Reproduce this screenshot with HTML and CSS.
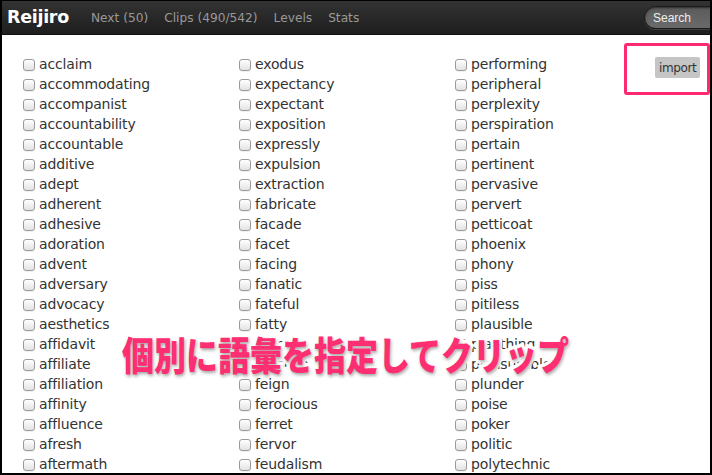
FILE: index.html
```html
<!DOCTYPE html>
<html>
<head>
<meta charset="utf-8">
<link rel="stylesheet" href="styles.css">
</head>
<body>
<div class="frame">
  <header class="navbar">
    <span class="brand">Reijiro</span>
    <nav class="nav">
      <a class="nav-link">Next (50)</a>
      <a class="nav-link">Clips (490/542)</a>
      <a class="nav-link">Levels</a>
      <a class="nav-link">Stats</a>
    </nav>
    <div class="search">Search</div>
  </header>
  <main class="content">
    <div class="columns">
      <ul class="col">
        <li><input type="checkbox"><span>acclaim</span></li>
        <li><input type="checkbox"><span>accommodating</span></li>
        <li><input type="checkbox"><span>accompanist</span></li>
        <li><input type="checkbox"><span>accountability</span></li>
        <li><input type="checkbox"><span>accountable</span></li>
        <li><input type="checkbox"><span>additive</span></li>
        <li><input type="checkbox"><span>adept</span></li>
        <li><input type="checkbox"><span>adherent</span></li>
        <li><input type="checkbox"><span>adhesive</span></li>
        <li><input type="checkbox"><span>adoration</span></li>
        <li><input type="checkbox"><span>advent</span></li>
        <li><input type="checkbox"><span>adversary</span></li>
        <li><input type="checkbox"><span>advocacy</span></li>
        <li><input type="checkbox"><span>aesthetics</span></li>
        <li><input type="checkbox"><span>affidavit</span></li>
        <li><input type="checkbox"><span>affiliate</span></li>
        <li><input type="checkbox"><span>affiliation</span></li>
        <li><input type="checkbox"><span>affinity</span></li>
        <li><input type="checkbox"><span>affluence</span></li>
        <li><input type="checkbox"><span>afresh</span></li>
        <li><input type="checkbox"><span>aftermath</span></li>
      </ul>
      <ul class="col">
        <li><input type="checkbox"><span>exodus</span></li>
        <li><input type="checkbox"><span>expectancy</span></li>
        <li><input type="checkbox"><span>expectant</span></li>
        <li><input type="checkbox"><span>exposition</span></li>
        <li><input type="checkbox"><span>expressly</span></li>
        <li><input type="checkbox"><span>expulsion</span></li>
        <li><input type="checkbox"><span>extraction</span></li>
        <li><input type="checkbox"><span>fabricate</span></li>
        <li><input type="checkbox"><span>facade</span></li>
        <li><input type="checkbox"><span>facet</span></li>
        <li><input type="checkbox"><span>facing</span></li>
        <li><input type="checkbox"><span>fanatic</span></li>
        <li><input type="checkbox"><span>fateful</span></li>
        <li><input type="checkbox"><span>fatty</span></li>
        <li><input type="checkbox"><span>faucet</span></li>
        <li><input type="checkbox"><span>feasible</span></li>
        <li><input type="checkbox"><span>feign</span></li>
        <li><input type="checkbox"><span>ferocious</span></li>
        <li><input type="checkbox"><span>ferret</span></li>
        <li><input type="checkbox"><span>fervor</span></li>
        <li><input type="checkbox"><span>feudalism</span></li>
      </ul>
      <ul class="col">
        <li><input type="checkbox"><span>performing</span></li>
        <li><input type="checkbox"><span>peripheral</span></li>
        <li><input type="checkbox"><span>perplexity</span></li>
        <li><input type="checkbox"><span>perspiration</span></li>
        <li><input type="checkbox"><span>pertain</span></li>
        <li><input type="checkbox"><span>pertinent</span></li>
        <li><input type="checkbox"><span>pervasive</span></li>
        <li><input type="checkbox"><span>pervert</span></li>
        <li><input type="checkbox"><span>petticoat</span></li>
        <li><input type="checkbox"><span>phoenix</span></li>
        <li><input type="checkbox"><span>phony</span></li>
        <li><input type="checkbox"><span>piss</span></li>
        <li><input type="checkbox"><span>pitiless</span></li>
        <li><input type="checkbox"><span>plausible</span></li>
        <li><input type="checkbox"><span>plaything</span></li>
        <li><input type="checkbox"><span>pleasurable</span></li>
        <li><input type="checkbox"><span>plunder</span></li>
        <li><input type="checkbox"><span>poise</span></li>
        <li><input type="checkbox"><span>poker</span></li>
        <li><input type="checkbox"><span>politic</span></li>
        <li><input type="checkbox"><span>polytechnic</span></li>
      </ul>
      <div class="actions">
        <button class="import">import</button>
      </div>
    </div>
    <div class="highlight"></div>
    <div class="caption">個別に語彙を指定してクリップ</div>
  </main>
</div>
</body>
</html>
```

FILE: styles.css
```css
* { box-sizing: border-box; }
html, body { margin: 0; padding: 0; background: #000; }
.frame {
  width: 712px;
  height: 475px;
  border: 2px solid #000;
  border-top-width: 1px;
  background: #fff;
  overflow: hidden;
  position: relative;
}
.navbar {
  height: 34px;
  display: flex;
  align-items: center;
  background: linear-gradient(#333 0%, #262626 60%, #1f1f1f 100%);
  border-bottom: 1px solid #111;
}
.brand {
  font-family: "DejaVu Sans", sans-serif;
  font-weight: bold;
  font-size: 17.5px;
  letter-spacing: -0.3px;
  color: #fff;
  padding-left: 5px;
  margin-top: -1px;
}
.nav {
  display: flex;
  margin-left: 14px;
}
.nav-link {
  font-family: "DejaVu Sans", sans-serif;
  font-size: 12.2px;
  color: #999;
  padding: 0 8px;
}
.search {
  margin-left: auto;
  margin-right: -20px;
  width: 86px;
  height: 23px;
  border-radius: 12px;
  border: 1px solid #1a1a1a;
  background: linear-gradient(#5a5a5a, #6b6b6b);
  box-shadow: inset 0 1px 2px rgba(0,0,0,0.5), 0 1px 0 rgba(255,255,255,0.12);
  font-family: "Liberation Sans", sans-serif;
  font-size: 12px;
  color: #eee;
  padding: 4px 0 0 8px;
}
.content {
  padding-top: 19px;
}
.columns {
  display: grid;
  grid-template-columns: 216px 216px 200px auto;
  padding-left: 21px;
}
.col {
  list-style: none;
  margin: 0;
  padding: 0;
}
.col li {
  height: 20px;
  display: flex;
  align-items: center;
  gap: 4px;
  font-family: "DejaVu Sans", sans-serif;
  font-size: 14px;
  letter-spacing: -0.15px;
  color: #333;
}
.col input {
  appearance: none;
  -webkit-appearance: none;
  flex: none;
  margin: 1px 0 0 0;
  width: 12px;
  height: 12px;
  border: 1px solid #9a9a9a;
  border-radius: 3px;
  background: linear-gradient(#fff, #e2e2e2);
  box-shadow: 0 1px 0 rgba(0,0,0,0.05);
}
.actions {
  padding-top: 3px;
}
.import {
  font-family: "DejaVu Sans", sans-serif;
  font-size: 12px;
  letter-spacing: -0.4px;
  color: #333;
  background: #c5c5c5;
  border: none;
  border-radius: 2px;
  height: 21px;
  padding: 0 4px;
}
.highlight {
  position: absolute;
  left: 622px;
  top: 42px;
  width: 86px;
  height: 52px;
  border: 3px solid #fe2a6f;
  border-radius: 3px;
}
.caption {
  position: absolute;
  left: 120px;
  top: 328px;
  font-family: "Noto Sans CJK JP", sans-serif;
  font-weight: 900;
  font-size: 32px;
  line-height: 48px;
  color: #fd2e72;
  -webkit-text-stroke: 6px #fff;
  paint-order: stroke fill;
  text-shadow: 1px 2px 3px rgba(0,0,0,0.35);
  white-space: nowrap;
  transform: scaleY(1.2);
  transform-origin: 0 50%;
}
```
